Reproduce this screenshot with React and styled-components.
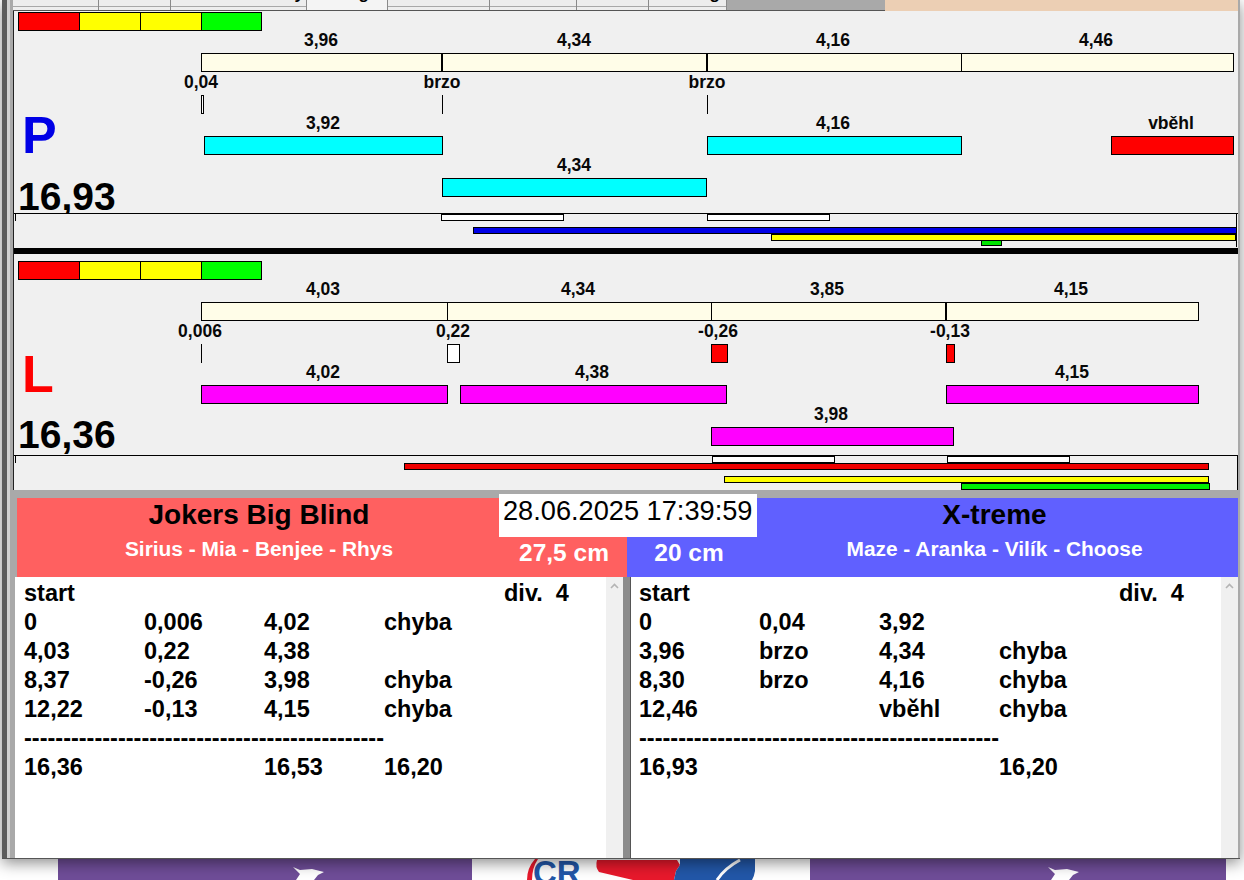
import React from 'react'
import styled, { createGlobalStyle } from 'styled-components'

const ORIGIN = 14 // page x of the chart's left edge

const GlobalStyle = createGlobalStyle`
  * { box-sizing: border-box; }
  html, body { margin: 0; padding: 0; background: #fff; overflow: hidden; }
  body { font-family: "Liberation Sans", Arial, sans-serif; color: #000; }
`

const Page = styled.div`
  width: 1244px;
  height: 880px;
  display: flex;
  flex-direction: column;
  overflow: hidden;
`

const Window = styled.div`
  position: relative;
  z-index: 1;
  flex: none;
  width: 1238px;
  height: 859px;
  margin-left: 2px;
  padding: 0 2px 0 11px;
  display: flex;
  flex-direction: column;
  background: linear-gradient(to right, #5c5c5c 0 5px, #d2d2d2 5px 8px, #a9a9a9 8px);
  border-bottom: 1px solid #555;
  box-shadow: 0 4px 14px rgba(0, 0, 0, 0.45);
`

const TabStrip = styled.div`
  flex: none;
  height: 11px;
  display: flex;
`

const Tabs = styled.div`
  width: 872px;
  display: flex;
  background: #a9a9a9;
  border-bottom: 1px solid #555;
`

const Tab = styled.div`
  width: ${p => p.$w}px;
  height: 10px;
  background: ${p => (p.$active ? '#f4f4f4' : 'linear-gradient(to bottom, #ededed 0 6px, #a8a8a8 6px 7px, #eeeeee 7px)')};
  border-right: 1px solid #8a8a8a;
  padding-right: ${p => p.$pad}px;
  overflow: hidden;
  text-align: right;
`

const TabLabel = styled.span`
  display: block;
  margin-top: -14px;
  font-size: 17px;
  font-weight: bold;
  line-height: 16px;
`

const Peach = styled.div`
  flex: 1;
  background: #eccfb4;
`

const Chart = styled.div`
  flex: none;
  height: 479px;
  border-left: 1px solid #222;
  background: #f0f0f0;
  display: flex;
  flex-direction: column;
`

const LanePanel = styled.div`
  position: relative;
  flex: none;
  padding-top: ${p => p.$top}px;
  display: flex;
  flex-direction: column;
`

const Lights = styled.div`
  display: flex;
  height: 19px;
  margin-left: 4px;
`

const Light = styled.div`
  width: 62px;
  margin-left: -1px;
  background: ${p => p.$c};
  border: 1px solid #000;
  &:first-child { margin-left: 0; }
  &:last-child { width: 61px; }
`

const Track = styled.div`
  position: relative;
  flex: none;
  height: ${p => p.$h}px;
  margin-top: ${p => p.$mt || 0}px;
`

const Value = styled.span`
  position: absolute;
  left: ${p => p.$x - ORIGIN}px;
  top: 0;
  transform: translateX(-50%);
  font-size: 17.5px;
  font-weight: bold;
  line-height: 16px;
  white-space: nowrap;
  color: #080808;
`

const Bar = styled.div`
  position: absolute;
  left: ${p => p.$from - ORIGIN}px;
  top: 0;
  bottom: 0;
  width: ${p => p.$to - p.$from + 1}px;
  background: ${p => p.$c || 'transparent'};
  border: 1px solid #000;
  border-left-width: ${p => (p.$heavy ? 2 : 1)}px;
`

const Tick = styled.div`
  position: absolute;
  left: ${p => p.$x - ORIGIN}px;
  top: 0;
  bottom: 0;
  width: 1px;
  background: #000;
`

const Letter = styled.div`
  position: absolute;
  left: 8px;
  top: ${p => p.$top}px;
  font-size: 52px;
  font-weight: bold;
  line-height: 1;
  color: ${p => p.$c};
`

const Total = styled.div`
  position: absolute;
  left: 4px;
  top: ${p => p.$top}px;
  font-size: 39px;
  font-weight: bold;
  line-height: 1;
`

const Strip = styled.div`
  position: relative;
  flex: none;
  height: 35px;
  margin-top: ${p => p.$mt}px;
  background: #f0f0f0;
  border-top: 1px solid #000;
`

const StripBar = styled.div`
  position: absolute;
  left: ${p => p.$from - ORIGIN}px;
  top: ${p => p.$y}px;
  width: ${p => p.$to - p.$from}px;
  height: ${p => p.$h || 7}px;
  background: ${p => p.$c};
  border: 1px solid #000;
`

const StripEdge = styled.div`
  position: absolute;
  left: ${p => p.$x - ORIGIN}px;
  top: 0;
  height: ${p => p.$h}px;
  width: 1px;
  background: #000;
`

const Divider = styled.div`
  flex: none;
  height: 6px;
  background: #000;
`

const Scores = styled.div`
  position: relative;
  flex: none;
  height: 87px;
  margin-left: 4px;
  padding-top: 8px;
  background: #a9a9a9;
  display: flex;
`

const TeamHead = styled.div`
  flex: none;
  width: ${p => p.$w}px;
  display: flex;
  background: ${p => p.$c};
`

const Names = styled.div`
  flex: 1;
  display: flex;
  flex-direction: column;
  align-items: center;
`

const TeamName = styled.div`
  height: 34px;
  font-size: 28px;
  font-weight: bold;
  line-height: 34px;
`

const Members = styled.div`
  margin-top: 5px;
  font-size: 20.9px;
  font-weight: bold;
  line-height: 24px;
  color: #fff;
`

const Height = styled.div`
  flex: none;
  width: ${p => p.$w}px;
  padding-top: 40px;
  text-align: center;
  font-size: 24.5px;
  font-weight: bold;
  line-height: 30px;
  color: #fff;
`

const Clock = styled.div`
  position: absolute;
  left: 482px;
  top: 4px;
  width: 258px;
  height: 43px;
  padding: 2px 0 0 4px;
  background: #fff;
  font-size: 27.2px;
  line-height: 30px;
  white-space: nowrap;
`

const Lists = styled.div`
  flex: 1;
  min-height: 0;
  margin-left: 2px;
  display: flex;
`

const ListPane = styled.div`
  flex: none;
  width: ${p => p.$w}px;
  padding: 2px 0 0 ${p => p.$pad}px;
  background: #fff;
`

const Row = styled.div`
  display: grid;
  grid-template-columns: repeat(4, 120px) auto;
  height: 29px;
  font-size: 23.5px;
  font-weight: bold;
  line-height: 29px;
  white-space: pre;
`

const ScrollBar = styled.div`
  flex: none;
  width: ${p => p.$w}px;
  padding: 6px 0 0 ${p => p.$pad}px;
  background: #f0f0f0;
  color: #b4b4b4;
`

const Chevron = styled.svg`
  display: block;
`

const Gutter = styled.div`
  flex: none;
  width: 8px;
  background: linear-gradient(to right, #8c8c8c 0 7px, #555 7px);
`

const Backdrop = styled.div`
  flex: none;
  height: 21px;
  padding-left: 58px;
  display: flex;
  background: #fff;
`

const Banner = styled.div`
  position: relative;
  flex: none;
  width: ${p => p.$w}px;
  background: #6f4d98;
`

const Flag = styled.svg`
  position: absolute;
  left: ${p => p.$x}px;
  top: 8px;
`

const Logo = styled.svg`
  flex: none;
  margin: 0 55px;
`

const lanes = {
  P: {
    top: 1,
    letter: 'P',
    letterColor: '#0000e6',
    letterTop: 98,
    total: '16,93',
    totalTop: 166,
    stripGap: 16,
    lights: ['#ff0000', '#ffff00', '#ffff00', '#00ff00'],
    splits: [
      { x: 321, t: '3,96' },
      { x: 574, t: '4,34' },
      { x: 833, t: '4,16' },
      { x: 1096, t: '4,46' },
    ],
    segments: [
      { from: 201, to: 442 },
      { from: 441, to: 707, heavy: true },
      { from: 706, to: 962, heavy: true },
      { from: 961, to: 1233 },
    ],
    reactions: [
      { x: 201, t: '0,04' },
      { x: 442, t: 'brzo' },
      { x: 707, t: 'brzo' },
    ],
    ticks: [{ x: 442 }, { x: 707 }],
    marks: [{ from: 201, to: 203, c: '#fff' }],
    legLabels: [
      { x: 323, t: '3,92' },
      { x: 833, t: '4,16' },
      { x: 1171, t: 'vběhl' },
    ],
    legs: [
      { from: 204, to: 442, c: '#00ffff' },
      { from: 707, to: 961, c: '#00ffff' },
      { from: 1111, to: 1233, c: '#ff0000' },
    ],
    backLabels: [{ x: 574, t: '4,34' }],
    backs: [{ from: 442, to: 706, c: '#00ffff' }],
    strip: [
      { from: 441, to: 564, y: 0, c: '#fff' },
      { from: 707, to: 830, y: 0, c: '#fff' },
      { from: 473, to: 1237, y: 13, c: '#0000e6' },
      { from: 771, to: 1236, y: 20, c: '#ffff00' },
      { from: 981, to: 1002, y: 26, h: 6, c: '#00e600' },
    ],
    edge: { x: 1236, h: 33 },
  },
  L: {
    top: 7,
    letter: 'L',
    letterColor: '#ff0000',
    letterTop: 94,
    total: '16,36',
    totalTop: 161,
    stripGap: 9,
    lights: ['#ff0000', '#ffff00', '#ffff00', '#00ff00'],
    splits: [
      { x: 323, t: '4,03' },
      { x: 578, t: '4,34' },
      { x: 827, t: '3,85' },
      { x: 1071, t: '4,15' },
    ],
    segments: [
      { from: 201, to: 447 },
      { from: 447, to: 711 },
      { from: 711, to: 946 },
      { from: 945, to: 1198, heavy: true },
    ],
    reactions: [
      { x: 200, t: '0,006' },
      { x: 453, t: '0,22' },
      { x: 718, t: '-0,26' },
      { x: 950, t: '-0,13' },
    ],
    ticks: [{ x: 201 }],
    marks: [
      { from: 447, to: 459, c: '#fff' },
      { from: 711, to: 727, c: '#ff0000' },
      { from: 946, to: 954, c: '#ff0000' },
    ],
    legLabels: [
      { x: 323, t: '4,02' },
      { x: 592, t: '4,38' },
      { x: 1072, t: '4,15' },
    ],
    legs: [
      { from: 201, to: 447, c: '#ff00ff' },
      { from: 460, to: 726, c: '#ff00ff' },
      { from: 946, to: 1198, c: '#ff00ff' },
    ],
    backLabels: [{ x: 831, t: '3,98' }],
    backs: [{ from: 711, to: 953, c: '#ff00ff' }],
    strip: [
      { from: 712, to: 835, y: 0, c: '#fff' },
      { from: 947, to: 1070, y: 0, c: '#fff' },
      { from: 404, to: 1209, y: 7, c: '#f00000' },
      { from: 724, to: 1209, y: 20, c: '#ffff00' },
      { from: 961, to: 1210, y: 27, c: '#00f000' },
    ],
    edge: { x: 1237, h: 34 },
  },
}

const leftRows = [
  ['start', '', '', '', 'div.  4'],
  ['0', '0,006', '4,02', 'chyba'],
  ['4,03', '0,22', '4,38', ''],
  ['8,37', '-0,26', '3,98', 'chyba'],
  ['12,22', '-0,13', '4,15', 'chyba'],
  ['-'.repeat(46)],
  ['16,36', '', '16,53', '16,20'],
]

const rightRows = [
  ['start', '', '', '', 'div.  4'],
  ['0', '0,04', '3,92', ''],
  ['3,96', 'brzo', '4,34', 'chyba'],
  ['8,30', 'brzo', '4,16', 'chyba'],
  ['12,46', '', 'vběhl', 'chyba'],
  ['-'.repeat(46)],
  ['16,93', '', '', '16,20'],
]

const tabs = [
  { w: 86 },
  { w: 72 },
  { w: 136, t: 'y', pad: 2 },
  { w: 81, active: true, t: 'g', pad: 18 },
  { w: 102 },
  { w: 87 },
  { w: 72 },
  { w: 78, t: 'g', pad: 6 },
]

const Labels = ({ items, mt }) => (
  <Track $h={16} $mt={mt}>
    {items.map(v => <Value key={v.x} $x={v.x}>{v.t}</Value>)}
  </Track>
)

const Bars = ({ items, mt }) => (
  <Track $h={19} $mt={mt}>
    {items.map(b => <Bar key={b.from} $from={b.from} $to={b.to} $c={b.c} $heavy={b.heavy} />)}
  </Track>
)

const Lane = ({ data }) => (
  <LanePanel $top={data.top}>
    <Letter $c={data.letterColor} $top={data.letterTop}>{data.letter}</Letter>
    <Total $top={data.totalTop}>{data.total}</Total>
    <Lights>
      {data.lights.map((c, i) => <Light key={i} $c={c} />)}
    </Lights>
    <Labels items={data.splits} mt={1} />
    <Bars items={data.segments.map(s => ({ ...s, c: '#fffde8' }))} mt={5} />
    <Labels items={data.reactions} mt={2} />
    <Track $h={19} $mt={5}>
      {data.ticks.map(t => <Tick key={t.x} $x={t.x} />)}
      {data.marks.map(b => <Bar key={b.from} $from={b.from} $to={b.to} $c={b.c} />)}
    </Track>
    <Labels items={data.legLabels} mt={1} />
    <Bars items={data.legs} mt={5} />
    <Labels items={data.backLabels} mt={2} />
    <Bars items={data.backs} mt={5} />
    <Strip $mt={data.stripGap}>
      <StripEdge $x={15} $h={7} />
      {data.strip.map(b => <StripBar key={b.from} $from={b.from} $to={b.to} $y={b.y} $h={b.h} $c={b.c} />)}
      <StripEdge $x={data.edge.x} $h={data.edge.h} />
    </Strip>
  </LanePanel>
)

const RunList = ({ rows, width, pad }) => (
  <ListPane $w={width} $pad={pad}>
    {rows.map((cells, i) => (
      <Row key={i}>
        {cells.map((c, j) => <span key={j}>{c}</span>)}
      </Row>
    ))}
  </ListPane>
)

const Scroll = ({ width, pad }) => (
  <ScrollBar $w={width} $pad={pad}>
    <Chevron width="9" height="6" viewBox="0 0 9 6" fill="none" stroke="currentColor" strokeWidth="1.6">
      <path d="M1 5 L4.5 1.5 L8 5" />
    </Chevron>
  </ScrollBar>
)

const WingFlag = ({ x }) => (
  <Flag $x={x} width="34" height="13" viewBox="0 0 34 13">
    <path d="M1 0 L8 3 L20 2 L32 5 L26 8 L22 13 L4 13 L8 7 Z" fill="#fff" />
  </Flag>
)

export default function App() {
  return (
    <Page>
      <GlobalStyle />
      <Window>
        <TabStrip>
          <Tabs>
            {tabs.map((t, i) => (
              <Tab key={i} $w={t.w} $active={t.active} $pad={t.pad || 0}>
                {t.t && <TabLabel>{t.t}</TabLabel>}
              </Tab>
            ))}
          </Tabs>
          <Peach />
        </TabStrip>
        <Chart>
          <Lane data={lanes.P} />
          <Divider />
          <Lane data={lanes.L} />
        </Chart>
        <Scores>
          <TeamHead $c="#ff6060" $w={610}>
            <Names>
              <TeamName>Jokers Big Blind</TeamName>
              <Members>Sirius - Mia - Benjee - Rhys</Members>
            </Names>
            <Height $w={126}>27,5 cm</Height>
          </TeamHead>
          <TeamHead $c="#6060ff" $w={611}>
            <Height $w={124}>20 cm</Height>
            <Names>
              <TeamName>X-treme</TeamName>
              <Members>Maze - Aranka - Vilík - Choose</Members>
            </Names>
          </TeamHead>
          <Clock>28.06.2025 17:39:59</Clock>
        </Scores>
        <Lists>
          <RunList rows={leftRows} width={591} pad={9} />
          <Scroll width={17} pad={4} />
          <Gutter />
          <RunList rows={rightRows} width={590} pad={8} />
          <Scroll width={17} pad={4} />
        </Lists>
      </Window>
      <Backdrop>
        <Banner $w={414}><WingFlag x={234} /></Banner>
        <Logo width="228" height="21" viewBox="0 0 228 21">
          <path d="M8 0 Q0 9 0 21 L5 21 Q5 9 11 0 Z" fill="#e8192c" />
          <path d="M70 1 L150 1 L153 6 L149 12 L147 21 L106 21 L72 13 Q68 8 70 1 Z" fill="#e8192c" />
          <path d="M153 0 L228 0 L228 12 Q227 18 225 21 L147 21 L149 12 L153 6 Z" fill="#2257a8" />
          <path d="M213 1 Q198 9 190 21" stroke="#fff" strokeWidth="3" fill="none" />
          <text x="6" y="25" fontFamily="Liberation Sans" fontWeight="bold" fontSize="33" fill="#2257a8">CR</text>
        </Logo>
        <Banner $w={416}><WingFlag x={237} /></Banner>
      </Backdrop>
    </Page>
  )
}
